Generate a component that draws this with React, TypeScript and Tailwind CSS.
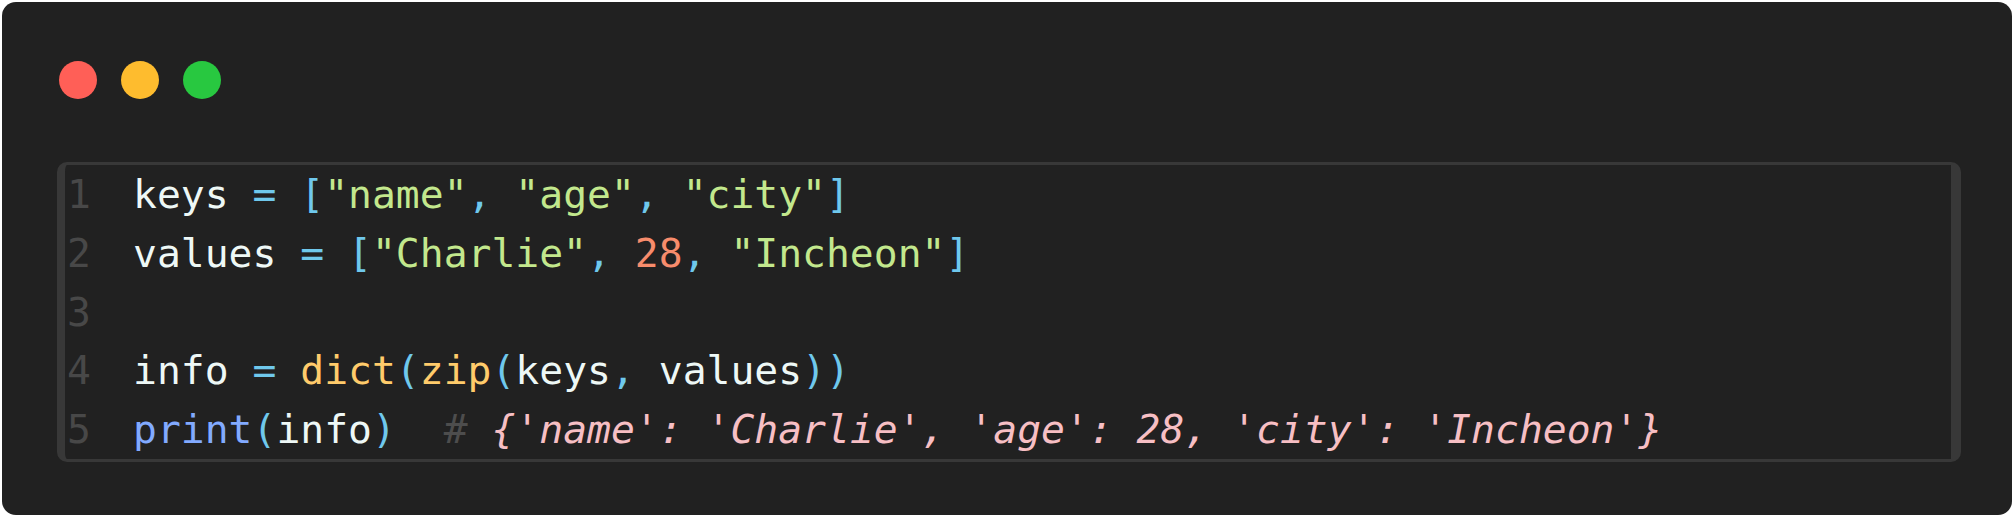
const mono = { fontFamily: '"DejaVu Sans Mono", "Liberation Mono", monospace' };

type Tok = [string, string];

const W = 'text-[#eef8f6]';
const P = 'text-[#6fc8ec]';
const S = 'text-[#c3e88d]';
const N = 'text-[#f78c6c]';
const F = 'text-[#ffcb6b]';
const B = 'text-[#82aaff]';
const C = 'text-[#f7bfc4] italic';
const H = 'text-[#4d4d4d]';

const lines: Tok[][] = [
  [
    ['keys ', W], ['= [', P], ['"name"', S], [', ', P], ['"age"', S], [', ', P], ['"city"', S], [']', P],
  ],
  [
    ['values ', W], ['= [', P], ['"Charlie"', S], [', ', P], ['28', N], [', ', P], ['"Incheon"', S], [']', P],
  ],
  [],
  [
    ['info ', W], ['= ', P], ['dict', F], ['(', P], ['zip', F], ['(', P], ['keys', W], [', ', P], ['values', W], ['))', P],
  ],
  [
    ['print', B], ['(', P], ['info', W], [')', P], ['  ', W], ['# ', H],
    ["{'name': 'Charlie', 'age': 28, 'city': 'Incheon'}", C],
  ],
];

export default function App() {
  return (
    <div className="min-h-screen bg-white pt-[2px] pl-[2px]">
      <div className="w-[2010px] h-[513px] rounded-[14px] bg-[#212121] pt-[59px] pl-[57px]">
        <div className="flex gap-[24px]">
          <div className="w-[38px] h-[38px] rounded-full bg-[#ff5f57]" />
          <div className="w-[38px] h-[38px] rounded-full bg-[#febc2e]" />
          <div className="w-[38px] h-[38px] rounded-full bg-[#28c840]" />
        </div>

        <div className="mt-[63px] ml-[-2px] w-[1904px] h-[300px] rounded-[10px] border-[#383838] border-t-[3px] border-b-[3px] border-l-[8px] border-r-[10px]">
          {lines.map((toks, i) => (
            <div key={i} className="flex h-[58.8px] leading-[58.8px] text-[39.7px] whitespace-pre" style={mono}>
              <span className="w-[68px] pl-[2px] text-[#484848]">{i + 1}</span>
              <span className="font-medium">
                {toks.map(([t, cls], j) => (
                  <span key={j} className={cls}>
                    {t}
                  </span>
                ))}
              </span>
            </div>
          ))}
        </div>
      </div>
    </div>
  );
}
